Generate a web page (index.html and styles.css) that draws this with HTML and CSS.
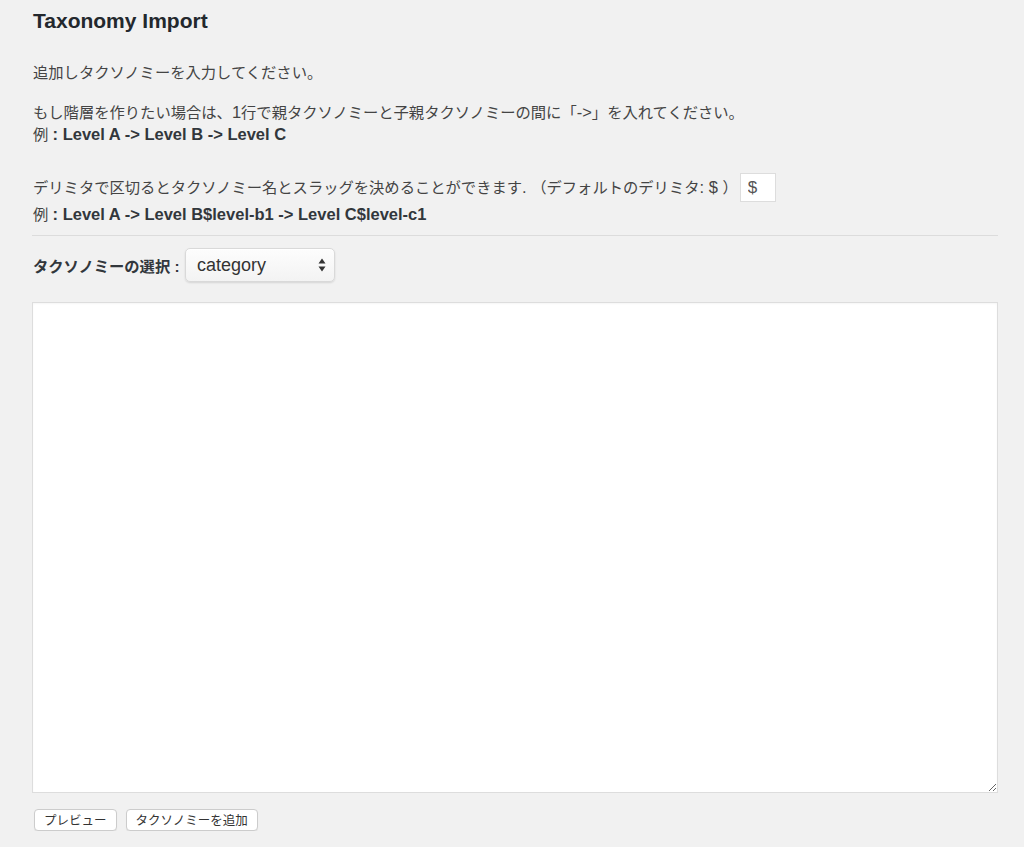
FILE: index.html
```html
<!DOCTYPE html>
<html lang="ja">
<head>
<meta charset="utf-8">
<title>Taxonomy Import</title>
<link rel="stylesheet" href="styles.css">
</head>
<body>
<div class="wrap">
  <h1 class="title">Taxonomy Import</h1>
  <p class="intro">追加しタクソノミーを入力してください。</p>
  <p class="hier">もし階層を作りたい場合は、<span class="lat">1</span>行で親タクソノミーと子親タクソノミーの間に「<span class="lat">-&gt;</span>」を入れてください。<br>例 <b>: Level A -&gt; Level B -&gt; Level C</b></p>
  <div class="delim">
    <div class="delim-row">デリミタで区切るとタクソノミー名とスラッグを決めることができます<span class="lat">.&nbsp;</span>（デフォルトのデリミタ<span class="lat">: $ </span>）<input class="delim-input" type="text" value="$"></div>
    <div class="delim-ex">例 <b>: Level A -&gt; Level B$level-b1 -&gt; Level C$level-c1</b></div>
  </div>
  <hr class="sep">
  <div class="select-row">
    <span class="select-label">タクソノミーの選択 :</span>
    <div class="select">
      <span class="select-text">category</span>
      <svg class="select-arrows" width="8" height="14" viewBox="0 0 8 14"><path d="M4 0.5 L7.5 5.5 L0.5 5.5 Z M4 13.5 L7.5 8.5 L0.5 8.5 Z" fill="#333"/></svg>
    </div>
  </div>
  <textarea class="terms"></textarea>
  <div class="buttons">
    <button class="btn" type="button">プレビュー</button>
    <button class="btn" type="button">タクソノミーを追加</button>
  </div>
</div>
</body>
</html>
```
FILE: styles.css
```css
html, body {
  margin: 0;
  padding: 0;
  background: #f1f1f1;
}
body {
  font-family: "Liberation Sans", "Noto Sans CJK JP", sans-serif;
  font-size: 15.3px;
  color: #444;
}
.wrap {
  padding: 10px 26px 0 32px;
  display: flex;
  flex-direction: column;
}
.title {
  margin: 0 0 30px 1px;
  font-size: 21px;
  line-height: 22px;
  font-weight: 700;
  color: #23282d;
}
.intro, .hier {
  margin: 0 0 0 1px;
  line-height: 22px;
}
.intro { margin-bottom: 18px; }
.hier {
  margin-bottom: 27px;
  height: 44px;
}
.lat {
  font-size: 16.5px;
  line-height: 1;
}
b {
  color: #32373c;
  font-weight: 700;
  font-size: 16.5px;
  line-height: 1;
}
.delim {
  display: flex;
  flex-direction: column;
  margin-left: 1px;
}
.delim-row {
  display: flex;
  align-items: center;
  height: 29px;
  line-height: 22px;
  white-space: pre;
}
.delim-input {
  box-sizing: border-box;
  width: 36px;
  height: 29px;
  margin: 0 0 0 2px;
  padding: 0 0 0 7px;
  border: 1px solid #ddd;
  background: #fff;
  font-family: "Liberation Sans", sans-serif;
  font-size: 17px;
  color: #555;
  outline: none;
}
.delim-ex {
  margin-top: 2px;
  line-height: 22px;
  height: 22px;
}
.sep {
  margin: 9px 0 0 0;
  border: 0;
  border-top: 1px solid #dcdcdc;
  height: 0;
}
.select-row {
  display: flex;
  align-items: center;
  margin-top: 12px;
  height: 34px;
  margin-left: 1px;
}
.select-label {
  font-weight: 700;
  color: #32373c;
  width: 152px;
}
.select {
  box-sizing: border-box;
  width: 150px;
  height: 34px;
  display: flex;
  align-items: center;
  justify-content: space-between;
  padding: 0 8px 0 11px;
  border: 1px solid #d9d9d9;
  border-radius: 5px;
  background: linear-gradient(#fdfdfd, #f3f3f3);
  box-shadow: 0 1px 2px rgba(0,0,0,0.12), inset 0 1px 0 #fff;
}
.select-text {
  font-family: "Liberation Sans", sans-serif;
  font-size: 18px;
  color: #333;
}
.terms {
  box-sizing: border-box;
  margin: 20px 0 0 0;
  width: 966px;
  height: 491px;
  border: 1px solid #ddd;
  background: #fff;
  box-shadow: inset 0 1px 2px rgba(0,0,0,0.04);
  outline: none;
  resize: both;
}
.buttons {
  display: flex;
  gap: 9px;
  margin: 16px 0 0 2px;
}
.btn {
  box-sizing: border-box;
  height: 22px;
  padding: 0 9px;
  border: 1px solid #ccc;
  border-radius: 4px;
  background: #fff;
  font-family: "Noto Sans CJK JP", sans-serif;
  font-size: 12.5px;
  color: #333;
  line-height: 20px;
  box-shadow: 0 1px 1px rgba(0,0,0,0.06);
}
```
